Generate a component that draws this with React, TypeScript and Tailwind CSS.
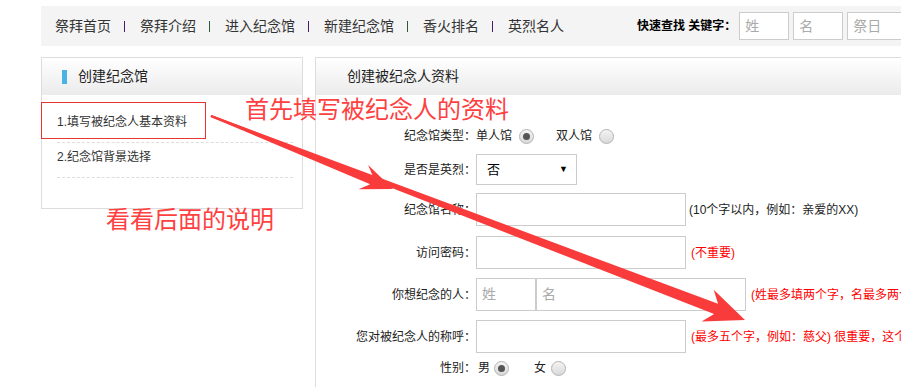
const navItems = ["祭拜首页", "祭拜介绍", "进入纪念馆", "新建纪念馆", "香火排名", "英烈名人"]

function Radio({ checked }: { checked?: boolean }) {
  return (
    <span className="flex h-[15px] w-[15px] items-center justify-center rounded-full border border-[#b4b4b4] bg-gradient-to-b from-[#f4f4f4] to-[#d9d9d9]">
      {checked && <span className="h-[7px] w-[7px] rounded-full bg-[#555]" />}
    </span>
  )
}

function Row({ label, className, children }: { label: string; className: string; children: React.ReactNode }) {
  return (
    <div className={"flex items-center " + className}>
      <div className="w-[160px] flex-none text-right">{label}</div>
      {children}
    </div>
  )
}

// annotation arrow: tapered shaft with a notched head
function arrowPoints(x1: number, y1: number, x2: number, y2: number, w0: number, w1: number, len: number, half: number) {
  const dx = x2 - x1
  const dy = y2 - y1
  const d = Math.hypot(dx, dy)
  const ux = dx / d
  const uy = dy / d
  const nx = -uy
  const ny = ux
  const nX = x2 - ux * (len - 9)
  const nY = y2 - uy * (len - 9)
  const bX = x2 - ux * len
  const bY = y2 - uy * len
  const pts = [
    [x1 + nx * w0, y1 + ny * w0],
    [nX + nx * w1, nY + ny * w1],
    [bX + nx * half, bY + ny * half],
    [x2, y2],
    [bX - nx * half, bY - ny * half],
    [nX - nx * w1, nY - ny * w1],
    [x1 - nx * w0, y1 - ny * w0],
  ]
  return pts.map((p) => p[0].toFixed(1) + "," + p[1].toFixed(1)).join(" ")
}

export default function App() {
  return (
    <div className="relative h-[387px] w-[901px] overflow-hidden bg-white font-['Liberation_Sans','Noto_Sans_CJK_SC',sans-serif] text-[12px] text-[#222]">
      {/* top nav */}
      <div className="ml-[41px] mt-[6px] flex h-[40px] w-[900px] items-center bg-[#f4f4f4] pl-[14px] text-[14px] text-[#333]">
        {navItems.map((item, i) => (
          <div key={item} className="flex items-center">
            {i > 0 && (
              <span
                className={
                  "ml-[13px] mr-[15px] h-[11px] w-px " + (i % 2 === 0 ? "bg-[#2f5a3a]" : "bg-[#4a1a70]")
                }
              />
            )}
            <span className="whitespace-nowrap">{item}</span>
          </div>
        ))}
        <span className="ml-[73px] whitespace-nowrap text-[12px] font-bold text-black">快速查找 关键字：</span>
        <div className="ml-[3px] flex flex-none gap-[4px]">
          <div className="flex h-[28px] w-[50px] flex-none items-center border border-[#ccc] bg-white pl-[5px] text-[14px] text-[#aaa]">姓</div>
          <div className="flex h-[28px] w-[50px] flex-none items-center border border-[#ccc] bg-white pl-[5px] text-[14px] text-[#aaa]">名</div>
          <div className="flex h-[28px] w-[70px] flex-none items-center border border-[#ccc] bg-white pl-[5px] text-[14px] text-[#aaa]">祭日</div>
        </div>
      </div>

      <div className="ml-[41px] mt-[11px] flex gap-[12px]">
        {/* left panel */}
        <div className="h-[152px] w-[262px] flex-none border border-[#ddd]">
          <div className="flex h-[37px] items-center bg-gradient-to-b from-white to-[#ebebeb] pl-[20px]">
            <span className="h-[14px] w-[5px] bg-[#4ab3e6]" />
            <span className="ml-[11px] text-[14px] text-[#222]">创建纪念馆</span>
          </div>
          <div className="mt-[13px]">
            <div className="ml-[15px] mr-[9px] h-[35px] border-b border-dashed border-[#ddd] pt-[6px] leading-[16px] text-[#333]">
              1.填写被纪念人基本资料
            </div>
            <div className="ml-[15px] mr-[9px] h-[35px] border-b border-dashed border-[#ddd] pt-[6px] leading-[16px] text-[#333]">
              2.纪念馆背景选择
            </div>
          </div>
        </div>

        {/* right panel */}
        <div className="h-[340px] w-[900px] flex-none border border-[#ddd]">
          <div className="flex h-[37px] items-center bg-gradient-to-b from-white to-[#ebebeb] pl-[31px] text-[14px] text-[#222]">
            创建被纪念人资料
          </div>

          <Row label="纪念馆类型：" className="mt-[31px] h-[20px]">
            <span>单人馆</span>
            <span className="ml-[7px]"><Radio checked /></span>
            <span className="ml-[22px]">双人馆</span>
            <span className="ml-[7px]"><Radio /></span>
          </Row>

          <Row label="是否是英烈：" className="mt-[8px]">
            <div className="flex h-[31px] w-[101px] flex-none items-center justify-between border border-[#ccc] pl-[10px] pr-[8px] text-[13px] text-black">
              <span>否</span>
              <span className="text-[9px]">▼</span>
            </div>
          </Row>

          <Row label="纪念馆名称：" className="mt-[8px]">
            <div className="h-[33px] w-[210px] flex-none border border-[#ccc]" />
            <span className="ml-[3px] whitespace-nowrap text-[#222]">(10个字以内，例如：亲爱的XX)</span>
          </Row>

          <Row label="访问密码：" className="mt-[10px]">
            <div className="h-[33px] w-[210px] flex-none border border-[#ccc]" />
            <span className="ml-[5px] whitespace-nowrap text-[#f00]">(不重要)</span>
          </Row>

          <Row label="你想纪念的人：" className="mt-[9px]">
            <div className="flex h-[33px] w-[60px] flex-none items-center border border-[#ccc] pl-[5px] text-[14px] text-[#aaa]">姓</div>
            <div className="flex h-[33px] w-[210px] flex-none items-center border border-[#ccc] pl-[5px] text-[14px] text-[#aaa]">名</div>
            <span className="ml-[5px] whitespace-nowrap text-[#f00]">(姓最多填两个字，名最多两个字)</span>
          </Row>

          <Row label="您对被纪念人的称呼：" className="mt-[9px]">
            <div className="h-[33px] w-[210px] flex-none border border-[#ccc]" />
            <span className="ml-[5px] whitespace-nowrap text-[#f00]">(最多五个字，例如：慈父) 很重要，这个称呼将显示在纪念馆中</span>
          </Row>

          <Row label="性别：" className="mt-[5px] h-[20px]">
            <span className="ml-[2px]">男</span>
            <span className="ml-[4px]"><Radio checked /></span>
            <span className="ml-[25px]">女</span>
            <span className="ml-[5px]"><Radio /></span>
          </Row>
        </div>
      </div>

      {/* annotations */}
      <div className="absolute left-[41px] top-[102px] h-[37px] w-[165px] border border-[#e8352f]" />
      <div className="absolute left-[245px] top-[97px] whitespace-nowrap text-[24px] leading-[26px] text-[#ff4040]">
        首先填写被纪念人的资料
      </div>
      <div className="absolute left-[106px] top-[207px] whitespace-nowrap text-[24px] leading-[26px] text-[#ff4040]">
        看看后面的说明
      </div>
      <svg className="pointer-events-none absolute left-0 top-0" width="901" height="387">
        <polygon points={arrowPoints(211, 116, 393, 189, 1, 4, 32, 13)} fill="#f93b3b" />
        <polygon points={arrowPoints(211, 116, 745, 320, 1, 5.5, 40, 17)} fill="#f93b3b" />
      </svg>
    </div>
  )
}
